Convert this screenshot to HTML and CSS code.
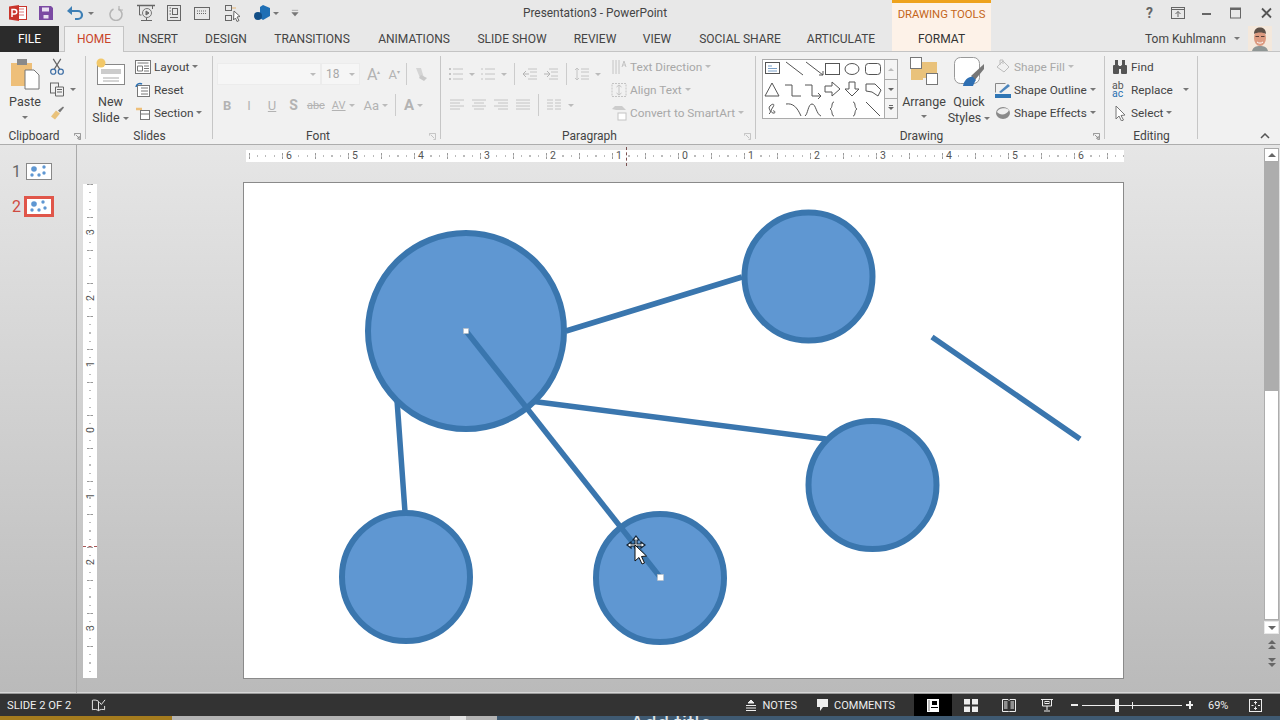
FILE: index.html
```html
<!DOCTYPE html>
<html lang="en">
<head>
<meta charset="utf-8">
<title>Presentation3 - PowerPoint</title>
<link rel="stylesheet" href="styles.css">
</head>
<body>
<div class="app">
  <header class="titlebar">
    <div class="qat">
      <svg class="qi logo" viewBox="0 0 18 16"><rect x="7" y="1.500" width="10.500" height="13" fill="#fff" stroke="#c9352b"/><path d="M10 4h5M10 7h5M10 10h5" stroke="#d77"/><path d="M0 1.500L10 0v16L0 14.500z" fill="#c9352b"/><path d="M3 12V4.500h2.500a2 2 0 0 1 0 4.500H3" fill="none" stroke="#fff" stroke-width="1.500"/></svg>
      <svg class="qi s30" viewBox="0 0 16 16"><path d="M1 1h12l2 2v12H1z" fill="#7b4aa3"/><rect x="4" y="2.500" width="7" height="4" fill="#e9e0f1"/><rect x="5.500" y="10" width="5" height="3.500" fill="#e9e0f1"/></svg>
      <svg class="qi s29" viewBox="0 0 18 16"><path d="M5 6h7a4 4 0 0 1 0 8h-3" fill="none" stroke="#3d7fb5" stroke-width="2.200"/><path d="M1 6l5-5v9z" fill="#3d7fb5"/></svg>
      <span class="drop d1"></span>
      <svg class="qi s15" viewBox="0 0 14 16" fill="none" stroke="#b5b5b5" stroke-width="1.500"><path d="M4.500 4a6 6 0 1 0 5 0"/><path d="M10 1v4h4" stroke-width="1.200"/></svg>
      <svg class="qi s20" viewBox="0 0 18 18" fill="none" stroke="#666"><path d="M0 1.500h18" stroke-width="1.500"/><path d="M2.500 2v9h2M15.500 2v3"/><circle cx="10" cy="9" r="4.500" stroke="#777"/><path d="M9 7l3 2-3 2z" fill="#777"/><path d="M4 16.500h11M9.500 14v3"/></svg>
      <svg class="qi s19" viewBox="0 0 16 16" fill="none" stroke="#666"><rect x="1.500" y=".5" width="13" height="15"/><rect x="6.500" y="3.500" width="5" height="6"/><path d="M3.500 3h1.500M3.500 6h1.500M3.500 9h1.500M4 12.500h8"/></svg>
      <svg class="qi s18" viewBox="0 0 16 16" fill="none" stroke="#666"><rect x=".5" y="2.500" width="15" height="12"/><path d="M3 6h10M3 8.500h10" stroke-dasharray="1 1"/></svg>
      <svg class="qi s19b" viewBox="0 0 16 17" fill="none" stroke="#666"><rect x=".5" y=".5" width="6" height="5"/><rect x=".5" y="10.500" width="6" height="5"/><path d="M7 3h4" stroke="#e8b470"/><path d="M9 6l6 5.500-3 .5 2 3.500-2 1-1.500-3.500-2 2z" fill="#fff"/></svg>
      <svg class="qi s22" viewBox="0 0 18 16"><path d="M10 0l7 3v8l-7 4-3-2V2z" fill="#1f6fb5"/><circle cx="5" cy="11" r="4" fill="#124e86"/></svg>
      <span class="drop d2"></span>
      <svg class="cust" viewBox="0 0 9 9"><path d="M1 1.500h7M1 4h7l-3.500 4z" fill="#777" stroke="#777" stroke-width=".6"/></svg>
    </div>
    <div class="doc-title">Presentation3 - PowerPoint</div>
    <div class="ctx-label">DRAWING TOOLS</div>
    <div class="winbtns">
      <span class="help">?</span>
      <svg class="wi w1" viewBox="0 0 14 12" fill="none" stroke="#666"><rect x=".5" y=".5" width="13" height="11"/><path d="M.5 2.500h13M7 10V4.500M4.500 7L7 4.500 9.500 7"/></svg>
      <svg class="wi w2" viewBox="0 0 11 12"><rect x="1" y="6" width="9" height="2" fill="#666"/></svg>
      <svg class="wi w3" viewBox="0 0 11 11" fill="none" stroke="#666"><rect x=".5" y=".5" width="10" height="10"/><path d="M.5 1.500h10" stroke-width="2"/></svg>
      <svg class="wi w4" viewBox="0 0 11 11" stroke="#555" stroke-width="1.800"><path d="M1 1l9 9M10 1l-9 9"/></svg>
    </div>
  </header>

  <nav class="tabs">
    <div class="tab file">FILE</div>
    <div></div>
    <div class="tab home">HOME</div>
    <div class="tab">INSERT</div>
    <div class="tab">DESIGN</div>
    <div class="tab">TRANSITIONS</div>
    <div class="tab">ANIMATIONS</div>
    <div class="tab">SLIDE SHOW</div>
    <div class="tab">REVIEW</div>
    <div class="tab">VIEW</div>
    <div class="tab">SOCIAL SHARE</div>
    <div class="tab">ARTICULATE</div>
    <div></div>
    <div class="tab format">FORMAT</div>
    <div class="account">
      <span>Tom Kuhlmann</span><span class="drop d3"></span>
      <svg class="avatar" viewBox="0 0 24 25"><rect width="24" height="25" fill="#f4e8dc"/><path d="M4 25c1-4 4-5 8-5s7 1 8 5z" fill="#8f9695"/><ellipse cx="12" cy="12" rx="6" ry="8" fill="#dc9a80"/><path d="M6 8C6 3 9 1.500 12 1.500S18 3 18 8C15 6 9 6 6 8z" fill="#5d5048"/><path d="M7.500 10.500h3.500M13 10.500h3.500" stroke="#5a4038"/><path d="M9 16c2 1.500 4 1.500 6 0" stroke="#fff" fill="none"/></svg>
    </div>
  </nav>

  <section class="ribbon">
    <div class="group g-clip">
      <div class="gbody">
        <div class="bigbtn paste">
          <svg class="ic-paste" viewBox="0 0 30 32"><path d="M1 5h21v23H1z" fill="#eebf79"/><rect x="7" y="1" width="10" height="6" fill="#8a8a8a"/><path d="M15 12h9l5 5v14H15z" fill="#fff" stroke="#777"/></svg>
          <span>Paste</span><span class="drop dc"></span>
        </div>
        <div class="clip-tools">
          <svg class="ci" viewBox="0 0 16 18" fill="none" stroke="#3d6ea5" stroke-width="1.300"><path d="M4 1l7 11M12 1L5 12" stroke="#666"/><circle cx="4" cy="14.500" r="2.700"/><circle cx="12" cy="14.500" r="2.700"/></svg>
          <div class="copyrow"><svg class="ci" viewBox="0 0 16 16" fill="none" stroke="#666"><rect x="1.500" y="1.500" width="8" height="10"/><path d="M6.500 5.500h8v9h-8z" fill="#f1f1f1"/><path d="M8 8h5M8 10.500h5"/></svg><span class="drop"></span></div>
          <svg class="ci" viewBox="0 0 16 16"><path d="M9 6l5-4 1 1-4 5z" fill="#777"/><path d="M2 12l5-6 4 3-5 6z" fill="#e9c27b"/></svg>
        </div>
      </div>
      <div class="glabel with-launch"><span>Clipboard</span><svg class="launch" viewBox="0 0 8 8" fill="none" stroke="#888"><path d="M.5 3V.5H7.500V7.500H5M2 2l4 4M6 3.500V6H3.500"/></svg></div>
    </div>

    <div class="group g-slides">
      <div class="gbody">
        <div class="bigbtn newslide">
          <svg class="ic-new" viewBox="0 0 30 28"><rect x="1.500" y="6.500" width="27" height="20" fill="#fff" stroke="#888"/><rect x="5" y="11" width="20" height="5" fill="#ccc"/><path d="M7 20h16M7 23h16" stroke="#aaa"/><circle cx="5" cy="5" r="4.500" fill="#f2c869"/></svg>
          <span>New</span><span>Slide <i class="drop"></i></span>
        </div>
        <div class="smallcol">
          <div class="sitem"><svg class="si" viewBox="0 0 16 16" fill="#fff" stroke="#777"><rect x=".5" y="1.500" width="15" height="13"/><path d="M2.500 4h11M2.500 7h5v5h-5zM9 7h5M9 9.500h5M9 12h5"/></svg>Layout<i class="drop inl"></i></div>
          <div class="sitem"><svg class="si" viewBox="0 0 16 16" fill="none" stroke="#777"><rect x="2.500" y="3.500" width="12" height="11" fill="#fff"/><path d="M6 6h7M6 9h7M6 12h7"/><path d="M1 5a4 4 0 0 1 6-3" stroke="#2a6fb0" stroke-width="1.500"/></svg>Reset</div>
          <div class="sitem"><svg class="si" viewBox="0 0 16 16" fill="none" stroke="#777"><path d="M1 4h6" stroke="#eebf79" stroke-width="2.500"/><rect x="5.500" y="5.500" width="9" height="9" fill="#fff"/><path d="M5.500 9h9"/></svg>Section<i class="drop inl"></i></div>
        </div>
      </div>
      <div class="glabel">Slides</div>
    </div>

    <div class="group g-font off">
      <div class="gbody font-body">
        <div class="row r1">
          <div class="field f-name"><i class="drop"></i></div>
          <div class="field f-size">18<i class="drop"></i></div>
          <span class="glyph big">A<sup>▴</sup></span>
          <span class="glyph">A<sup>▾</sup></span>
          <span class="vsep"></span>
          <svg class="si" viewBox="0 0 16 16"><path d="M3 2h5l3 10H7z" fill="#d5d5d5"/><path d="M8 9l6 3-3 3-5-3z" fill="#c9c9c9"/></svg>
        </div>
        <div class="row r2">
          <b class="glyph g1">B</b><i class="glyph g2">I</i><u class="glyph g3">U</u><b class="glyph g4">S</b>
          <s class="glyph g5">abc</s><span class="glyph g6">AV</span><i class="drop"></i>
          <span class="glyph g7">Aa</span><i class="drop"></i><span class="vsep v2"></span>
          <b class="glyph g8">A</b><i class="drop"></i>
        </div>
      </div>
      <div class="glabel with-launch"><span>Font</span><svg class="launch" viewBox="0 0 8 8" fill="none" stroke="#bbb"><path d="M.5 3V.5H7.500V7.500H5M2 2l4 4"/></svg></div>
    </div>

    <div class="group g-para off">
      <div class="gbody">
        <div class="para-left">
          <div class="row p1">
            <svg class="pi" viewBox="0 0 16 16" stroke="#c4c4c4"><path d="M5 3h10M5 8h10M5 13h10"/><path d="M1 3h2M1 8h2M1 13h2" stroke-width="2"/></svg><i class="drop"></i>
            <svg class="pi" viewBox="0 0 16 16" stroke="#c4c4c4"><path d="M5 3h10M5 8h10M5 13h10M1 3h2M1 8h2M1 13h2"/></svg><i class="drop"></i>
            <span class="vsep"></span>
            <svg class="pi" viewBox="0 0 16 16" stroke="#c4c4c4"><path d="M6 3h9M8 6h7M8 10h7M6 13h9"/><path d="M1 8h6M4 5L1 8l3 3" fill="none" stroke="#b5b5b5"/></svg>
            <svg class="pi" viewBox="0 0 16 16" stroke="#c4c4c4"><path d="M6 3h9M8 6h7M8 10h7M6 13h9"/><path d="M1 8h6M4 5l3 3-3 3" fill="none" stroke="#b5b5b5"/></svg>
            <span class="vsep"></span>
            <svg class="pi" viewBox="0 0 16 16" stroke="#c4c4c4" fill="none"><path d="M7 3h8M7 6h8M7 10h8M7 13h8M3 2v12M1 4l2-2 2 2M1 12l2 2 2-2"/></svg><i class="drop"></i>
          </div>
          <div class="row p2">
            <svg class="pi" viewBox="0 0 16 16" stroke="#c4c4c4"><path d="M1 3h14M1 6h10M1 9h14M1 12h10"/></svg>
            <svg class="pi" viewBox="0 0 16 16" stroke="#c4c4c4"><path d="M1 3h14M3 6h10M1 9h14M3 12h10"/></svg>
            <svg class="pi" viewBox="0 0 16 16" stroke="#c4c4c4"><path d="M1 3h14M5 6h10M1 9h14M5 12h10"/></svg>
            <svg class="pi" viewBox="0 0 16 16" stroke="#c4c4c4"><path d="M1 3h14M1 6h14M1 9h14M1 12h14"/></svg>
            <span class="vsep"></span>
            <svg class="pi" viewBox="0 0 16 16" stroke="#c4c4c4"><path d="M1 3h6M1 6h6M1 9h6M1 12h6M9 3h6M9 6h6M9 9h6M9 12h6"/></svg><i class="drop"></i>
          </div>
        </div>
        <div class="smallcol">
          <div class="sitem"><svg class="si" viewBox="0 0 16 16" fill="none" stroke="#c4c4c4"><path d="M2 1v14M5 1v14M8 1v14"/><path d="M11 8l2-6 2 6M11.700 6h2.600"/></svg>Text Direction<i class="drop inl"></i></div>
          <div class="sitem"><svg class="si" viewBox="0 0 16 16" fill="none" stroke="#c4c4c4" stroke-dasharray="2 1"><rect x="1" y="1.500" width="14" height="13"/><path d="M8 3v10M5.500 5L8 3l2.500 2M5.500 11L8 13l2.500-2" stroke-dasharray="none"/></svg>Align Text<i class="drop inl"></i></div>
          <div class="sitem"><svg class="si" viewBox="0 0 16 16"><path d="M1 4l3-3h7l4 4H5z" fill="#ccc"/><rect x="7" y="8" width="8" height="7" fill="#fff" stroke="#c4c4c4"/></svg>Convert to SmartArt<i class="drop inl"></i></div>
        </div>
      </div>
      <div class="glabel with-launch"><span>Paragraph</span><svg class="launch" viewBox="0 0 8 8" fill="none" stroke="#bbb"><path d="M.5 3V.5H7.500V7.500H5M2 2l4 4"/></svg></div>
    </div>

    <div class="group g-draw">
      <div class="gbody">
        <div class="gallery">
          <svg class="shapes" viewBox="0 0 121 57" fill="none" stroke="#555">
            <rect x="2.500" y="2.500" width="14" height="11"/><path d="M5 6h4M5 8.500h9M5 11h9" stroke="#7aa0c8"/>
            <path d="M23 2l17 13M43 2l17 13M60 15v-4M60 15h-4"/>
            <rect x="62.500" y="3.500" width="14" height="11"/><ellipse cx="89" cy="9" rx="7" ry="5.500"/><rect x="102.500" y="3.500" width="15" height="11" rx="3"/>
            <path d="M2 36l7-13 7 13zM22 25h7v11h9M42 25h7v11h9M55 33l3 3-3 3M62 26h7v-4l8 7-8 7v-4h-7zM86 22h6v7h4l-7 7-7-7h4zM103 24h9l6 6-3 6-6-4-6-1z"/>
            <path d="M6 54c4-3-2-5 1-8s5-2 3 1-3 5 0 6 2-3 0-2M23 44c7-1 11 3 15 12M42 56c3-2 3-12 7-12s4 10 9 12M71 42c-3 0-1 6-4 7 3 1 1 7 4 7M90 42c3 0 1 6 4 7-3 1-1 7-4 7M103 42l14 14"/>
          </svg>
          <div class="gal-scroll"><span class="up"></span><span><i class="tri"></i></span><span class="more"><i class="tri"></i></span></div>
        </div>
        <div class="bigbtn arrange">
          <svg class="ic-arr" viewBox="0 0 28 28"><rect x="11" y="5" width="16" height="16" fill="#e9c27b"/><rect x="1" y="12" width="12" height="11" fill="#e9c27b"/><rect x=".5" y=".5" width="11" height="11" fill="#fff" stroke="#777"/><rect x="16.500" y="16.500" width="11" height="11" fill="#fff" stroke="#777"/></svg>
          <span>Arrange</span><span class="drop dc"></span>
        </div>
        <div class="bigbtn quick">
          <svg class="ic-quick" viewBox="0 0 30 30"><rect x=".5" y=".5" width="25" height="26" rx="6" fill="#fff" stroke="#999"/><path d="M30 7L17 19l4 4 9-11z" fill="#777"/><path d="M9 29c1-6 6-10 10-9l3 3c-2 3-3 6-3 6z" fill="#2f6fb2"/></svg>
          <span>Quick</span><span>Styles <i class="drop"></i></span>
        </div>
        <div class="smallcol shape-col">
          <div class="sitem off"><svg class="si" viewBox="0 0 16 16" fill="none" stroke="#bdbdbd"><path d="M2 8l6-6 6 6-5 5z"/><path d="M5 6V1h3v4"/></svg>Shape Fill<i class="drop inl"></i></div>
          <div class="sitem"><svg class="si" viewBox="0 0 16 16"><rect x="0" y="12" width="16" height="4" fill="#2f76b5"/><path d="M.5 10.500v-9h10" fill="none" stroke="#888"/><path d="M4 10l9-8 2 2-9 7z" fill="#4d86bd"/></svg>Shape Outline<i class="drop inl"></i></div>
          <div class="sitem"><svg class="si" viewBox="0 0 16 16"><ellipse cx="8" cy="8" rx="7" ry="6" fill="#8a8a8a"/><path d="M2 7c1-4 9-5 12-2-2 5-9 6-12 2z" fill="#efefef"/></svg>Shape Effects<i class="drop inl"></i></div>
        </div>
      </div>
      <div class="glabel with-launch"><span>Drawing</span><svg class="launch" viewBox="0 0 8 8" fill="none" stroke="#888"><path d="M.5 3V.5H7.500V7.500H5M2 2l4 4M6 3.500V6H3.500"/></svg></div>
    </div>

    <div class="group g-edit">
      <div class="gbody edit-body">
        <div class="smallcol">
          <div class="sitem"><svg class="si" viewBox="0 0 16 16" fill="#555"><rect x="1" y="6" width="6" height="9" rx="1"/><rect x="9" y="6" width="6" height="9" rx="1"/><rect x="3" y="1" width="3" height="6"/><rect x="10" y="1" width="3" height="6"/><rect x="6" y="7" width="4" height="3"/></svg>Find</div>
          <div class="sitem"><span class="abac"><span class="ab">ab</span><span>ac</span></span>Replace<i class="drop rep"></i></div>
          <div class="sitem"><svg class="si" viewBox="0 0 16 16" fill="#fff" stroke="#777"><path d="M4 1l9 9-4 .5 2.500 4.500-2 1L7 11l-3 3z"/></svg>Select<i class="drop inl"></i></div>
        </div>
      </div>
      <div class="glabel">Editing</div>
    </div>
    <svg class="collapse" viewBox="0 0 10 6" fill="none" stroke="#555" stroke-width="1.500"><path d="M1 5l4-4 4 4"/></svg>
  </section>

  <main class="workspace">
    <aside class="thumbs">
      <div class="thumb"><span class="num">1</span>
        <svg class="mini" viewBox="0 0 26 17"><rect x=".5" y=".5" width="25" height="16" fill="#fff" stroke="#888"/><g fill="#5f97d2"><circle cx="8" cy="6" r="2.800"/><circle cx="18" cy="4" r="1.700"/><circle cx="18" cy="10" r="1.700"/><circle cx="6" cy="12" r="1.700"/><circle cx="13" cy="12" r="1.700"/></g></svg>
      </div>
      <div class="thumb current"><span class="num">2</span>
        <svg class="mini big" viewBox="0 0 30 21"><rect x="1.500" y="1.500" width="27" height="18" fill="#fff" stroke="#e0564a" stroke-width="3"/><g fill="#5f97d2"><circle cx="10" cy="8" r="2.800"/><circle cx="19" cy="6" r="1.700"/><circle cx="21" cy="12" r="1.700"/><circle cx="8" cy="14" r="1.700"/><circle cx="15" cy="14" r="1.700"/></g></svg>
      </div>
    </aside>
    <div class="canvas-area">
      <div class="hruler">
        <span>6</span><span>5</span><span>4</span><span>3</span><span>2</span><span>1</span><span>0</span><span>1</span><span>2</span><span>3</span><span>4</span><span>5</span><span>6</span>
        <i class="rmark"></i>
      </div>
      <div class="canvas-row">
        <div class="vruler">
          <span>3</span><span>2</span><span>1</span><span>0</span><span>1</span><span>2</span><span>3</span>
          <i class="rmark-v"></i>
        </div>
        <div class="slide">
          <svg class="slide-svg" viewBox="244 183 879 495">
            <g class="conn">
              <path d="M566 331L742 277M932 337L1080 439M530 401L826 439M397 400L405 512"/>
            </g>
            <g class="node">
              <circle class="bigc" cx="466" cy="331" r="98"/>
              <circle cx="808.500" cy="276.500" r="64"/>
              <circle cx="872.500" cy="485" r="64"/>
              <circle cx="406" cy="577" r="64"/>
              <circle cx="660" cy="578" r="64"/>
            </g>
            <path class="conn-sel" d="M466 331L660 577"/>
            <rect class="handle" x="463.500" y="328.500" width="5" height="5"/>
            <rect class="handle" x="657.500" y="574.500" width="6" height="6"/>
            <g class="cursor">
              <path class="mv" d="M636 536l3 4h-2v4h4v-2l4 3-4 3v-2h-4v2h-2v-2h-4v2l-4-3 4-3v2h4v-4h-2z"/>
              <path class="arrow" d="M635 545v16l4-3.500 3 6.500 2.500-1-3-6.500 5-.5z"/>
            </g>
          </svg>
        </div>
      </div>
    </div>
    <div class="scrollbar">
      <div class="sb-btn top"><i class="up-tri"></i></div>
      <div class="sb-track"></div>
      <div class="sb-thumb"></div>
      <div class="sb-btn low"><i class="dn-tri"></i></div>
      <div class="sb-page"><i class="up-tri"></i><i class="up-tri"></i></div>
      <div class="sb-page"><i class="dn-tri"></i><i class="dn-tri"></i></div>
    </div>
  </main>

  <footer class="status">
    <span class="st-slide">SLIDE 2 OF 2</span>
    <svg class="st-book" viewBox="0 0 16 14" fill="none" stroke="#eee"><path d="M8 3C6 1.500 3 1.500 1.500 2v10c2-.5 4.500-.5 6.500 1 2-1.500 4.500-1.500 6.500-1V8M8 3v10"/><path d="M9 4l2 2.500 4-5"/></svg>
    <span class="st-spacer"></span>
    <span class="st-item"><svg class="st-i" viewBox="0 0 12 12" stroke="#eee"><path d="M1 6.500h10M1 9h10M1 11.500h10"/><path d="M6 1l3 3H3z" fill="#eee"/></svg>NOTES</span>
    <span class="st-item c"><svg class="st-i w" viewBox="0 0 13 12" fill="#eee"><path d="M1 0h11v8H7l-3 4V8H1z"/></svg>COMMENTS</span>
    <span class="view active"><svg viewBox="0 0 14 13"><path d="M1 0h12v13H1z" fill="#fff"/><rect x="6" y="2" width="5" height="4" fill="#000"/><rect x="2" y="1" width="2" height="11" fill="#bbb"/><rect x="5" y="8" width="7" height="1" fill="#000"/></svg></span>
    <span class="view"><svg viewBox="0 0 14 13" fill="#eee"><rect width="6" height="5.500"/><rect x="8" width="6" height="5.500"/><rect y="7.500" width="6" height="5.500"/><rect x="8" y="7.500" width="6" height="5.500"/></svg></span>
    <span class="view"><svg viewBox="0 0 14 13" fill="none" stroke="#eee"><path d="M.5.500h5.500l1 1 1-1h5.500v12H8l-1 .5-1-.5H.5z"/><path d="M2 3h3.500M2 5h3.500M2 7h3.500M2 9h3.500M8.500 3H12M8.500 5H12M8.500 7H12M8.500 9H12"/></svg></span>
    <span class="view"><svg viewBox="0 0 14 13" fill="none" stroke="#eee"><path d="M1 .5h12M2.500 1v6h9V1M7 7v4M4 12h6"/><rect x="5" y="2.500" width="4" height="2"/></svg></span>
    <span class="zm-btn minus"></span>
    <span class="zoomtrack"><i class="mid"></i><i class="knob"></i></span>
    <span class="zm-btn plus"></span>
    <span class="zm-val">69%</span>
    <svg class="st-fit" viewBox="0 0 13 13" fill="none" stroke="#eee"><rect x=".5" y=".5" width="12" height="12"/><path d="M6.500 2.500v3M5 4l1.500-1.500L8 4M6.500 10.500v-3M5 9l1.500 1.500L8 9M2.500 6.500h2M9 6.500h2"/></svg>
  </footer>
  <div class="strip"><span class="strip-gold"></span><span class="strip-gray"></span><span class="strip-light"></span><span class="strip-gray2"></span><span class="strip-rest">Add title</span></div>
</div>
</body>
</html>
```
FILE: styles.css
```css
* { box-sizing: border-box; }
html, body { margin: 0; padding: 0; }
body { width: 1280px; height: 720px; overflow: hidden; font-family: "Roboto", "Liberation Sans", sans-serif; font-size: 12px; color: #444; background: #e8e8e8; }
.app { display: flex; flex-direction: column; width: 1280px; height: 720px; }
svg { display: block; flex: none; }
i { font-style: normal; }

/* title bar */
.titlebar { height: 26px; flex: none; display: flex; background: #e8e8e8; }
.qat { width: 510px; display: flex; align-items: center; padding-left: 9px; }
.qi { height: 16px; width: 16px; }
.logo { width: 18px; }
.s30 { margin-left: 11px; }
.s29 { margin-left: 12px; width: 18px; }
.s15 { margin-left: 15px; width: 14px; }
.s20 { margin-left: 14px; width: 18px; height: 18px; }
.s19 { margin-left: 11px; }
.s18 { margin-left: 12px; }
.s19b { margin-left: 15px; height: 17px; }
.s22 { margin-left: 12px; width: 18px; }
.drop { display: inline-block; width: 0; height: 0; border: 3px solid transparent; border-top-color: #777; border-bottom-width: 0; flex: none; vertical-align: middle; }
.d1 { margin-left: 4px; }
.d2 { margin-left: 2px; }
.cust { width: 8px; height: 8px; margin-left: 12px; }
.doc-title { width: 170px; text-align: center; font-size: 11.9px; line-height: 27px; color: #444; }
.ctx-label { width: 99px; margin-left: 212px; text-align: center; background: #fdf2e8; border-top: 3px solid #eea21c; color: #c4661a; font-size: 11.3px; line-height: 23px; }
.winbtns { flex: 1; display: flex; align-items: center; }
.help { margin-left: 155px; font-weight: 700; color: #666; font-size: 14px; }
.wi { height: 12px; }
.w1 { width: 14px; margin-left: 18px; }
.w2 { width: 11px; margin-left: 16px; }
.w3 { width: 11px; margin-left: 18px; }
.w4 { width: 11px; margin-left: 20px; }

/* tabs */
.tabs { height: 26px; flex: none; display: grid; grid-template-columns: 59px 5px 60px 68px 68px 104px 100px 96px 70px 54px 112px 90px 6px 99px 1fr; border-bottom: 1px solid #c4c4c4; background: #e8e8e8; }
.tab { text-align: center; line-height: 26px; font-size: 12px; color: #444; }
.file { background: #2b2b2b; color: #fff; height: 26px; }
.home { background: #f1f1f1; color: #c8452a; border: 1px solid #c4c4c4; border-bottom: 0; height: 26px; line-height: 25px; }
.format { background: #fdf2e8; height: 25px; color: #333; }
.account { display: flex; align-items: center; padding-left: 154px; font-size: 12px; white-space: nowrap; height: 25px; }
.d3 { margin-left: 8px; }
.avatar { width: 24px; height: 25px; margin-left: 8px; }

/* ribbon */
.ribbon { height: 93px; flex: none; display: flex; background: #f1f1f1; border-bottom: 1px solid #adadad; position: relative; color: #444; }
.group { display: flex; flex-direction: column; padding-top: 3px; position: relative; flex: none; }
.group::after { content: ""; position: absolute; right: 0; top: 4px; bottom: 5px; width: 1px; background: #c6c6c6; }
.gbody { height: 71px; flex: none; display: flex; }
.glabel { height: 18px; padding-top: 2px; line-height: 17px; text-align: center; font-size: 12px; color: #444; position: relative; }
.with-launch { padding-right: 18px; }
.launch { position: absolute; width: 7px; height: 7px; right: 5px; top: 7px; }
.g-clip { width: 86px; }
.g-slides { width: 127px; }
.g-font { width: 228px; }
.g-para { width: 315px; }
.g-draw { width: 349px; }
.g-edit { width: 93px; }
.bigbtn { display: flex; flex-direction: column; align-items: center; line-height: 16px; font-size: 12.5px; white-space: nowrap; }
.paste { width: 50px; padding-top: 3px; }
.ic-paste { width: 30px; height: 32px; margin-bottom: 4px; }
.dc { margin-top: 6px; }
.arrange .dc { margin-top: 5px; }
.clip-tools { display: flex; flex-direction: column; gap: 6px; padding-top: 3px; margin-left: -1px; }
.ci { width: 16px; height: 17px; }
.copyrow { display: flex; align-items: center; gap: 5px; }
.newslide { width: 49px; padding-top: 3px; }
.ic-new { width: 30px; height: 28px; margin-bottom: 8px; }
.smallcol { display: flex; flex-direction: column; }
.sitem { height: 23px; display: flex; align-items: center; white-space: nowrap; font-size: 11.8px; }
.si { width: 16px; height: 16px; margin-right: 3px; }
.inl { margin-left: 3px; }
.off { color: #a8a8a8; }
.off .drop { border-top-color: #bbb; }
.off .glabel { color: #444; }
.font-body { flex-direction: column; padding-left: 4px; }
.row { display: flex; align-items: center; }
.r1 { height: 24px; margin-top: 7px; }
.field { height: 22px; background: #f6f6f6; border: 1px solid #ececec; display: flex; align-items: center; justify-content: flex-end; padding-right: 4px; }
.f-name { width: 104px; }
.f-size { width: 39px; justify-content: space-between; padding-left: 4px; }
.glyph { color: #b3b3b3; font-size: 13px; }
.glyph sup { font-size: 6px; }
.big { font-size: 16px; margin-left: 7px; }
.r1 .glyph:not(.big) { margin-left: 8px; font-size: 13px; }
.vsep { width: 1px; height: 22px; background: #ccc; flex: none; margin: 0 6px; }
.r2 { height: 28px; margin-top: 5px; padding-left: 6px; }
.g2 { margin-left: 16px; }
.g3 { margin-left: 17px; }
.g4 { margin-left: 13px; font-size: 14px; }
.g5 { margin-left: 9px; font-size: 11px; }
.g6 { margin-left: 7px; font-size: 11px; text-decoration: underline; }
.g7 { margin-left: 9px; }
.r2 .drop { margin-left: 3px; }
.g8 { font-size: 15px; }
.v2 { margin: 0 8px 0 7px; }
.para-left { width: 170px; padding-left: 7px; display: flex; flex-direction: column; }
.p1 { height: 24px; gap: 5px; margin-top: 7px; }
.p2 { height: 24px; gap: 6px; margin-top: 7px; padding-left: 1px; }
.pi { width: 16px; height: 16px; }
.p1 .vsep { margin: 0 2px; }
.p2 .vsep { margin: 0 1px; }
.gallery { width: 136px; height: 60px; margin-left: 6px; margin-top: 4px; display: flex; background: #fff; border: 1px solid #ababab; flex: none; }
.shapes { width: 121px; height: 57px; }
.gal-scroll { display: flex; flex-direction: column; width: 13px; flex: none; border-left: 1px solid #ababab; background: #f4f4f4; }
.gal-scroll span { flex: 1; border-bottom: 1px solid #ababab; display: flex; justify-content: center; align-items: center; }
.gal-scroll span:last-child { border-bottom: 0; }
.tri { width: 0; height: 0; border: 3px solid transparent; border-top-color: #666; border-bottom-width: 0; }
.more .tri { box-shadow: 0 -3px 0 -1px #666; }
.up::after { content: ""; width: 0; height: 0; border: 3px solid transparent; border-bottom-color: #bbb; border-top-width: 0; }
.arrange { width: 52px; padding-top: 2px; }
.ic-arr { width: 28px; height: 28px; margin-bottom: 9px; }
.quick { width: 38px; padding-top: 2px; }
.ic-quick { width: 30px; height: 30px; margin-bottom: 7px; }
.shape-col { margin-left: 7px; }
.edit-body { padding-left: 7px; }
.abac { width: 16px; margin-right: 3px; color: #2a6fb0; font-size: 10.5px; line-height: 8px; display: flex; flex-direction: column; }
.ab { color: #555; }
.rep { margin-left: 10px; }
.collapse { position: absolute; width: 10px; height: 6px; right: 10px; bottom: 5px; }

/* workspace */
.workspace { flex: 1; min-height: 0; display: flex; background: linear-gradient(#e6e6e6, #bababa); border-bottom: 1px solid #9a9a9a; box-shadow: inset 0 -1px 0 #d8d8d8; }
.thumbs { width: 77px; flex: none; border-right: 1px solid #a9a9a9; padding: 16px 0 0 12px; display: flex; flex-direction: column; gap: 15px; }
.thumb { display: flex; align-items: center; height: 20px; font-size: 16px; color: #666; }
.num { width: 12px; }
.thumb.current .num { color: #cf4a40; }
.mini { width: 26px; height: 17px; margin-left: 2px; }
.mini.big { width: 30px; height: 21px; margin-left: 0; }
.canvas-area { flex: 1; min-width: 0; display: flex; flex-direction: column; }
.hruler { height: 12px; width: 878px; margin: 5px 0 0 169px; background-color: #fff; background-image: repeating-linear-gradient(90deg, #bbb 0 1px, transparent 1px 8.25px), repeating-linear-gradient(90deg, #999 0 1px, transparent 1px 33px); background-position: 3px 5px, 3px 3px; background-size: 100% 2px, 100% 6px; background-repeat: no-repeat; display: grid; grid-template-columns: repeat(13, 66px); padding-left: 10px; font-size: 10.5px; line-height: 12px; color: #555; text-align: center; position: relative; }
.hruler span { background: #fff; justify-self: center; padding: 0 2px; }
.rmark { position: absolute; left: 380px; top: -3px; bottom: -4px; border-left: 1px dashed #7a5050; }
.canvas-row { flex: 1; display: flex; padding: 20px 0 0 6px; }
.vruler { width: 14px; height: 494px; margin-top: 2px; background-color: #fff; background-image: repeating-linear-gradient(180deg, #bbb 0 1px, transparent 1px 8.25px), repeating-linear-gradient(180deg, #999 0 1px, transparent 1px 33px); background-position: 6px 0, 4px 0; background-size: 2px 100%, 6px 100%; background-repeat: no-repeat; font-size: 10.5px; color: #555; display: grid; grid-template-rows: repeat(7, 66px); padding-top: 15px; position: relative; margin-right: 146px; flex: none; }
.vruler span { display: flex; align-items: center; justify-content: center; transform: rotate(-90deg); height: 66px; }
.rmark-v { position: absolute; left: 0; right: 0; top: 362px; border-top: 1px dashed #a55; }
.slide { width: 881px; height: 497px; background: #fff; border: 1px solid #8a8a8a; flex: none; }
.slide-svg { width: 879px; height: 495px; }
.conn path, .conn-sel { fill: none; stroke: #3a76ae; stroke-width: 5.5; }
.node circle { fill: #5f97d2; stroke: #3a76ae; stroke-width: 6; }
.handle { fill: #fff; stroke: #bbb; stroke-width: .5; }
.mv { fill: #fff; stroke: #123; stroke-width: 1.2; }
.arrow { fill: #fff; stroke: #111; stroke-width: 1; }

/* scrollbar */
.scrollbar { width: 15px; flex: none; margin-right: 1px; padding-top: 3px; display: flex; flex-direction: column; }
.sb-btn { height: 14px; background: #fff; border: 1px solid #aaa; display: flex; align-items: center; justify-content: center; flex: none; }
.sb-track { height: 229px; background: #adadad; flex: none; }
.sb-thumb { height: 229px; background: #fff; border: 1px solid #adadad; border-top: 0; flex: none; }
.sb-btn.low { border-color: #e8e8e8; height: 13px; margin-top: 1px; }
.up-tri { display: block; width: 0; height: 0; border: 4px solid transparent; border-bottom-color: #666; border-top-width: 0; }
.dn-tri { display: block; width: 0; height: 0; border: 4px solid transparent; border-top-color: #666; border-bottom-width: 0; }
.sb-page { height: 16px; display: flex; flex-direction: column; align-items: center; justify-content: center; flex: none; gap: 1px; margin-top: 2px; }

/* status */
.status { height: 22px; flex: none; background: #333; color: #eee; display: flex; align-items: center; font-size: 11px; padding-left: 7px; }
.st-slide { width: 84px; font-size: 11.2px; }
.st-book { width: 15px; height: 14px; }
.st-spacer { flex: 1; }
.st-item { display: flex; align-items: center; gap: 5px; }
.st-item:first-of-type { gap: 6px; }
.st-item.c { margin-left: 19px; }
.st-i { width: 12px; height: 12px; }
.st-i.w { width: 13px; }
.view { width: 38px; height: 22px; display: flex; align-items: center; justify-content: center; flex: none; }
.view.active { background: #000; margin-left: 19px; }
.view svg { width: 14px; height: 13px; }
.zm-btn { width: 7px; height: 2px; background: #eee; position: relative; flex: none; }
.minus { margin-left: 5px; }
.plus { margin-left: 4px; }
.plus::after { content: ""; position: absolute; left: 2.5px; top: -3px; width: 2px; height: 8px; background: #eee; }
.zoomtrack { width: 100px; height: 1px; background: #eee; margin-left: 4px; position: relative; flex: none; }
.mid { position: absolute; left: 50px; top: -3px; width: 1px; height: 7px; background: #eee; }
.knob { position: absolute; left: 33px; top: -6px; width: 4px; height: 13px; background: #eee; }
.zm-val { margin-left: 15px; width: 41px; }
.st-fit { width: 13px; height: 13px; margin: 0 18px 0 0; }
.strip { height: 4px; flex: none; display: flex; overflow: hidden; }
.strip-gold { width: 172px; background: #a57c1e; }
.strip-gray { width: 278px; background: #b4b4b4; }
.strip-light { width: 16px; background: #e4e4e4; }
.strip-gray2 { width: 31px; background: #b4b4b4; }
.strip-rest { flex: 1; background: #3f5a72; color: #dfe5ea; font-size: 22px; line-height: 15px; padding-left: 133px; white-space: nowrap; }
```
